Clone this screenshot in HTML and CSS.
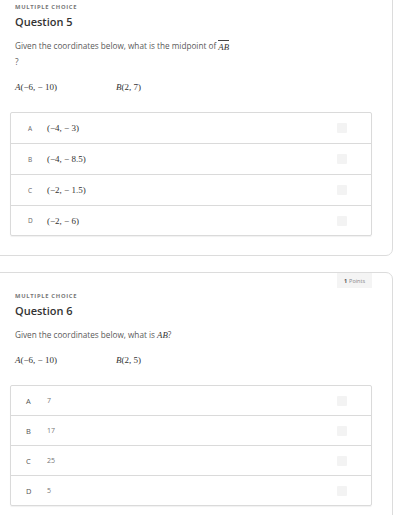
FILE: index.html
```html
<!DOCTYPE html>
<html>
<head>
<meta charset="utf-8">
<link rel="stylesheet" href="styles.css">
</head>
<body>
<div class="page">
  <section class="card card-first">
    <div class="label">MULTIPLE CHOICE</div>
    <h2 class="title">Question 5</h2>
    <p class="prompt">Given the coordinates below, what is the midpoint of <span class="math"><span class="over">AB</span></span><br>?</p>
    <div class="coords">
      <span class="coord"><i>A</i>(−6, − 10)</span>
      <span class="coord"><i>B</i>(2, 7)</span>
    </div>
    <div class="options tall">
      <div class="opt"><span class="letter">A</span><span class="ans math">(−4, − 3)</span><span class="box"></span></div>
      <div class="opt"><span class="letter">B</span><span class="ans math">(−4, − 8.5)</span><span class="box"></span></div>
      <div class="opt"><span class="letter">C</span><span class="ans math">(−2, − 1.5)</span><span class="box"></span></div>
      <div class="opt"><span class="letter">D</span><span class="ans math">(−2, − 6)</span><span class="box"></span></div>
    </div>
  </section>

  <section class="card">
    <div class="badge-row"><span class="badge"><b>1</b> Points</span></div>
    <div class="label">MULTIPLE CHOICE</div>
    <h2 class="title">Question 6</h2>
    <p class="prompt">Given the coordinates below, what is <span class="math"><i>AB</i></span>?</p>
    <div class="coords">
      <span class="coord"><i>A</i>(−6, − 10)</span>
      <span class="coord"><i>B</i>(2, 5)</span>
    </div>
    <div class="options">
      <div class="opt"><span class="letter big">A</span><span class="ans num">7</span><span class="box"></span></div>
      <div class="opt"><span class="letter big">B</span><span class="ans num">17</span><span class="box"></span></div>
      <div class="opt"><span class="letter big">C</span><span class="ans num">25</span><span class="box"></span></div>
      <div class="opt"><span class="letter big">D</span><span class="ans num">5</span><span class="box"></span></div>
    </div>
  </section>
</div>
</body>
</html>
```

FILE: styles.css
```css
* { box-sizing: border-box; }
html, body { margin: 0; padding: 0; background: #fff; }
body {
  font-family: "Open Sans", "Liberation Sans", sans-serif;
  color: #555;
  overflow: hidden;
  height: 515px;
}
.page {
  display: flex;
  flex-direction: column;
  gap: 16px;
  margin-top: -17px;
}
.card {
  margin-left: -10px;
  width: 403px;
  border: 1px solid #dcdcdc;
  border-radius: 7px;
  padding: 0 20px 19px 19px;
  background: #fff;
}
.card-first { padding-top: 18px; }
.badge-row {
  display: flex;
  justify-content: flex-end;
  height: 18px;
}
.badge {
  display: inline-flex;
  align-items: center;
  justify-content: center;
  width: 35px;
  height: 15px;
  background: #f4f4f4;
  font-size: 5.5px;
  color: #888;
  gap: 2px;
}
.badge b { color: #555; font-weight: 700; }
.label {
  padding-left: 5px;
  height: 10px;
  line-height: 10px;
  font-size: 5.8px;
  font-weight: 700;
  letter-spacing: 0.7px;
  color: #777;
}
.title {
  margin: 2px 0 0;
  padding-left: 5px;
  height: 16px;
  line-height: 16px;
  font-size: 11px;
  font-weight: 600;
  color: #333;
}
.prompt {
  margin: 8px 0 0;
  padding-left: 5px;
  line-height: 16px;
  font-size: 8.2px;
  color: #5a5a5a;
}
.math {
  font-family: "Liberation Serif", "DejaVu Serif", serif;
  font-size: 8.8px;
  color: #333;
}
.over {
  font-style: italic;
  border-top: 0.8px solid #444;
  padding-top: 0.5px;
}
.coords {
  display: flex;
  padding-left: 5px;
  margin-top: 10px;
  height: 14px;
  line-height: 14px;
  font-family: "Liberation Serif", "DejaVu Serif", serif;
  font-size: 9px;
  color: #333;
}
.coord:first-child { width: 101px; }
.options {
  margin-top: 18px;
  border: 1px solid #dadada;
  border-radius: 2px;
  box-shadow: 0 1px 1px rgba(0,0,0,0.06);
}
.opt {
  display: flex;
  align-items: center;
  height: 30px;
  border-top: 1px solid #dadada;
}
.opt:first-child { border-top: none; height: 29px; }
.tall .opt { height: 31px; }
.tall .opt:first-child { height: 30px; }
.tall .opt:last-child { height: 30px; }
.letter {
  width: 36px;
  padding-left: 17px;
  font-size: 6.5px;
  color: #666;
}
.letter.big {
  padding-left: 15px;
  font-size: 7.5px;
  color: #555;
}
.ans { flex: 1; }
.ans.math { font-size: 9px; color: #333; }
.num { font-size: 7px; color: #777; }
.box {
  width: 10px;
  height: 10px;
  background: #f3f3f3;
  border-radius: 1px;
  margin-right: 24px;
}
```
